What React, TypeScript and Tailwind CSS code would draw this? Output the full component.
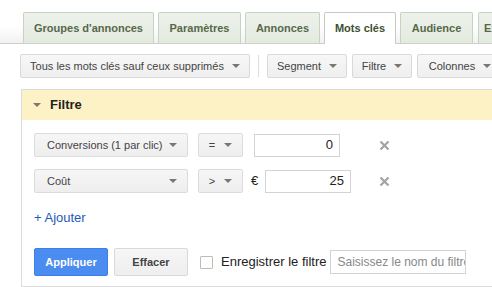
import React from "react";

const font = { fontFamily: '"Liberation Sans", Arial, sans-serif' };

function Caret({ className = "" }: { className?: string }) {
  return (
    <span
      className={
        "inline-block w-0 h-0 border-l-[4px] border-r-[4px] border-t-[4px] border-l-transparent border-r-transparent border-t-[#777] " +
        className
      }
    />
  );
}

function Tab({ label, w, active }: { label: string; w: string; active?: boolean }) {
  return (
    <div
      className={
        "h-[31px] flex items-center justify-center border border-b-0 rounded-t-[2px] text-[11px] font-bold shrink-0 " +
        w +
        (active
          ? " bg-white border-[#c3cdbd] text-[#3d4f2f] relative z-10 h-[32px] -mb-px"
          : " bg-gradient-to-b from-[#edf2ea] to-[#e3eadf] border-[#c8d2c2] text-[#56684a]")
      }
    >
      {label}
    </div>
  );
}

function ToolBtn({ label, w }: { label: string; w: string }) {
  return (
    <div
      className={
        "h-[24px] flex items-center justify-center gap-[8px] border border-[#d9d9d9] rounded-[2px] bg-gradient-to-b from-[#f7f7f7] to-[#efefef] text-[11px] text-[#444] shrink-0 " +
        w
      }
    >
      <span>{label}</span>
      <Caret />
    </div>
  );
}

function Select({ label, w, center }: { label: string; w: string; center?: boolean }) {
  return (
    <div
      className={
        "h-[24px] flex items-center border border-[#dcdcdc] rounded-[2px] bg-gradient-to-b from-[#f6f6f6] to-[#eeeeee] text-[11px] text-[#444] " +
        w +
        (center ? " justify-center gap-[9px]" : " justify-between pl-[12px] pr-[10px]")
      }
    >
      <span>{label}</span>
      <Caret />
    </div>
  );
}

function Cross() {
  return (
    <svg width="11" height="11" viewBox="0 0 11 11" className="shrink-0">
      <path d="M1.5 1.5 L9.5 9.5 M9.5 1.5 L1.5 9.5" stroke="#a3a3a3" strokeWidth="2.2" />
    </svg>
  );
}

export default function App() {
  return (
    <div className="w-[492px] h-[287px] overflow-hidden bg-white" style={font}>
      {/* onglets */}
      <div className="h-[44px] pt-[13px] pl-[23px] flex items-end border-b border-[#cbd3c6] bg-gradient-to-b from-white from-60% to-[#f1f1f1] whitespace-nowrap">
        <Tab label="Groupes d'annonces" w="w-[131px]" />
        <Tab label="Paramètres" w="w-[83px] ml-[4px]" />
        <Tab label="Annonces" w="w-[75px] ml-[4px]" />
        <Tab label="Mots clés" w="w-[72px] ml-[4px]" active />
        <Tab label="Audience" w="w-[73px] ml-[4px]" />
        <Tab label="Extensions" w="w-[90px] ml-[5px] !justify-start pl-[5px]" />
      </div>

      {/* barre d'outils */}
      <div className="mt-[10px] pl-[20px] flex items-center whitespace-nowrap">
        <ToolBtn label="Tous les mots clés sauf ceux supprimés" w="w-[230px]" />
        <div className="w-px h-[22px] bg-[#dedede] ml-[8px] mr-[8px] shrink-0" />
        <ToolBtn label="Segment" w="w-[80px]" />
        <ToolBtn label="Filtre" w="w-[60px] ml-[5px]" />
        <ToolBtn label="Colonnes" w="w-[86px] ml-[5px]" />
      </div>

      {/* panneau filtre */}
      <div className="mt-[11px] ml-[21px] w-[480px] border border-[#dcdcdc]">
        <div className="h-[30px] bg-[#fdf1c6] flex items-center pl-[11px] gap-[9px]">
          <Caret className="border-t-[#555]" />
          <span className="text-[13px] font-bold text-[#222]">Filtre</span>
        </div>

        <div className="pl-[12px] pt-[13px] pb-[10px]">
          <div className="flex items-center">
            <Select label="Conversions (1 par clic)" w="w-[154px]" />
            <Select label="=" w="w-[45px] ml-[10px]" center />
            <div className="ml-[11px] w-[86px] h-[23px] border border-[#d3d3d3] flex items-center justify-end pr-[6px] text-[13px] text-[#222]">
              0
            </div>
            <div className="w-[39px]" />
            <Cross />
          </div>

          <div className="flex items-center mt-[12px]">
            <Select label="Coût" w="w-[154px]" />
            <Select label=">" w="w-[45px] ml-[10px]" center />
            <span className="ml-[8px] text-[13px] text-[#222] w-[14px]">€</span>
            <div className="w-[86px] h-[23px] border border-[#d3d3d3] flex items-center justify-end pr-[6px] text-[13px] text-[#222]">
              25
            </div>
            <div className="w-[28px]" />
            <Cross />
          </div>

          <div className="mt-[17px] text-[13px] text-[#1d5ab9] leading-[16px]">+ Ajouter</div>

          <div className="mt-[22px] flex items-center whitespace-nowrap">
            <div className="w-[74px] h-[28px] rounded-[2px] bg-[#4a8cf0] border border-[#3f7fe6] text-white text-[11px] font-bold flex items-center justify-center">
              Appliquer
            </div>
            <div className="ml-[6px] w-[74px] h-[28px] rounded-[2px] bg-gradient-to-b from-[#f6f6f6] to-[#eeeeee] border border-[#d9d9d9] text-[#444] text-[11px] font-bold flex items-center justify-center">
              Effacer
            </div>
            <div className="ml-[12px] w-[13px] h-[13px] border border-[#bdbdbd] bg-white rounded-[1px]" />
            <span className="ml-[8px] text-[13px] text-[#222]">Enregistrer le filtre</span>
            <div className="ml-[4px] w-[136px] h-[24px] border border-[#d3d3d3] flex items-center pl-[6px] text-[12px] text-[#888] overflow-hidden">
              Saisissez le nom du filtre
            </div>
          </div>
        </div>
      </div>
    </div>
  );
}
